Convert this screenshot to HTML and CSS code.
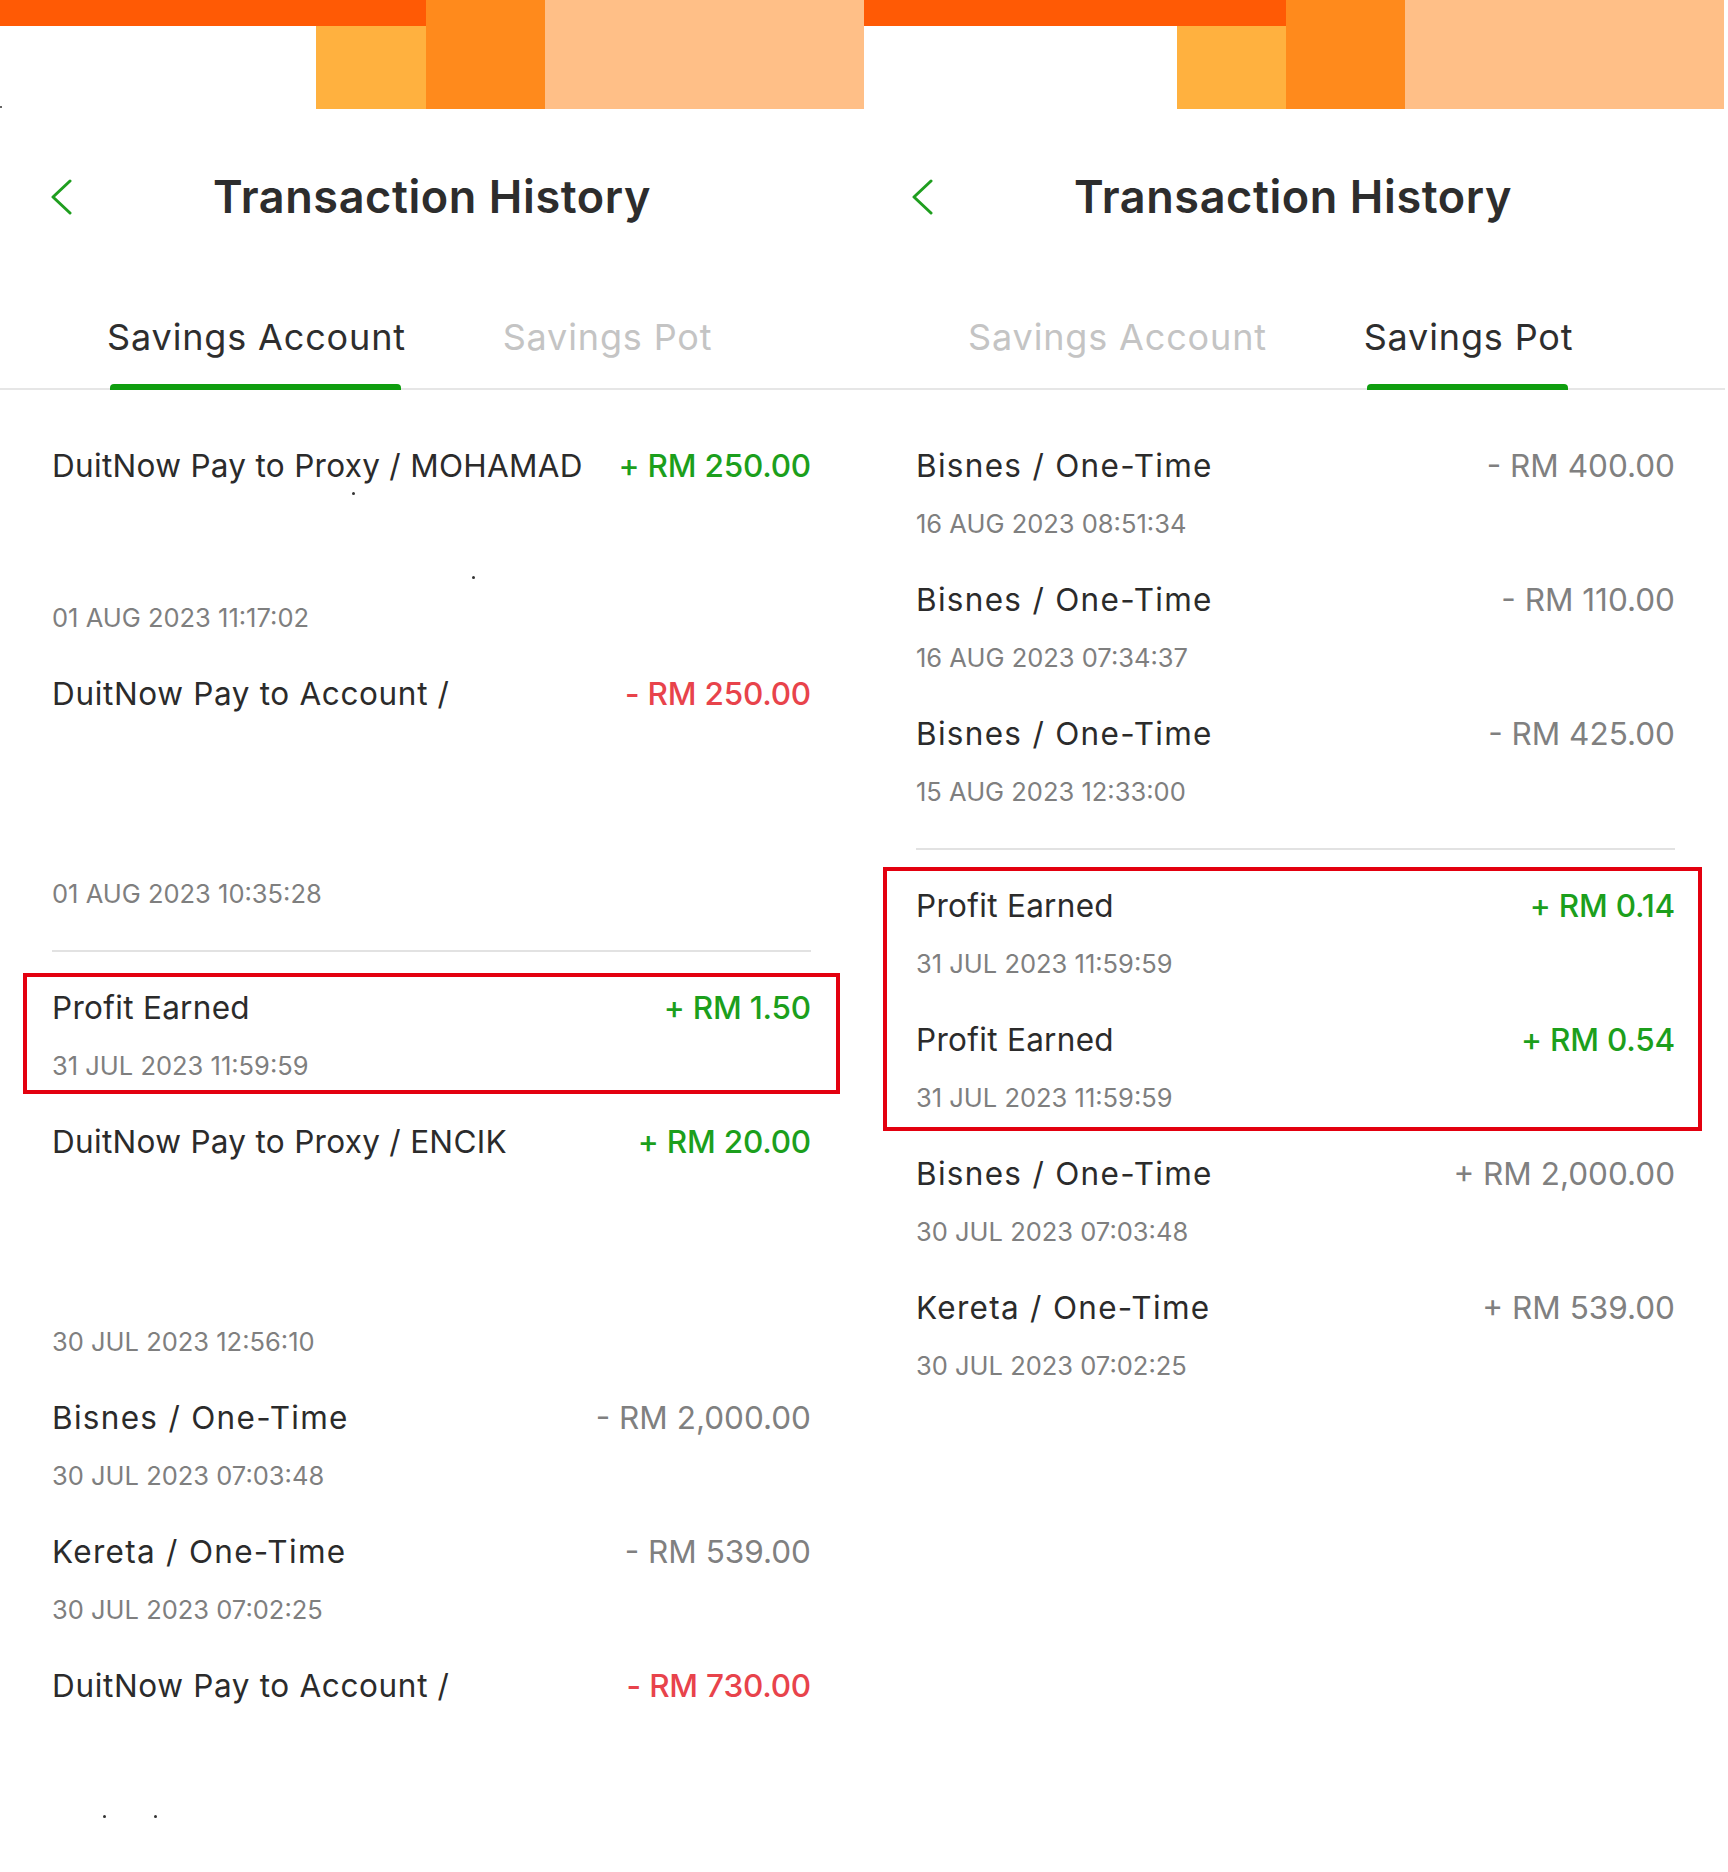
FILE: index.html
```html
<!DOCTYPE html>
<html lang="en">
<head>
<meta charset="utf-8">
<title>Transaction History</title>
<link rel="stylesheet" href="styles.css">
</head>
<body>
<div class="screens">
  <section class="panel">
    <div class="deco"><span class="d-red"></span><span class="d-lo"></span><span class="d-or"></span><span class="d-peach"></span></div>
    <header class="topbar">
      <svg class="back" width="24" height="36" viewBox="0 0 24 36"><polyline points="19,2 2,18 19,34" fill="none" stroke="#1f9e1f" stroke-width="3" stroke-linecap="round" stroke-linejoin="round"/></svg>
      <h1 class="title">Transaction History</h1>
    </header>
    <nav class="tabs">
      <div class="tab active"><span class="tab-label">Savings Account</span></div>
      <div class="tab"><span class="tab-label">Savings Pot</span></div>
    </nav>
    <ul class="list">
      <li class="row">
        <div class="line"><span class="name">DuitNow Pay to Proxy / MOHAMAD</span><span class="amt pos">+ RM 250.00</span></div>
        <div class="spacer s1"></div>
        <div class="date">01 AUG 2023 11:17:02</div>
      </li>
      <li class="row">
        <div class="line"><span class="name wide">DuitNow Pay to Account /</span><span class="amt neg">- RM 250.00</span></div>
        <div class="spacer s2"></div>
        <div class="date">01 AUG 2023 10:35:28</div>
      </li>
      <li class="sep"></li>
      <li class="highlight">
        <div class="row">
          <div class="line"><span class="name">Profit Earned</span><span class="amt pos">+ RM 1.50</span></div>
          <div class="date">31 JUL 2023 11:59:59</div>
        </div>
      </li>
      <li class="row">
        <div class="line"><span class="name">DuitNow Pay to Proxy / ENCIK</span><span class="amt pos">+ RM 20.00</span></div>
        <div class="spacer s2"></div>
        <div class="date">30 JUL 2023 12:56:10</div>
      </li>
      <li class="row">
        <div class="line"><span class="name cat">Bisnes / One-Time</span><span class="amt mute">- RM 2,000.00</span></div>
        <div class="date">30 JUL 2023 07:03:48</div>
      </li>
      <li class="row">
        <div class="line"><span class="name cat">Kereta / One-Time</span><span class="amt mute">- RM 539.00</span></div>
        <div class="date">30 JUL 2023 07:02:25</div>
      </li>
      <li class="row">
        <div class="line"><span class="name wide">DuitNow Pay to Account /</span><span class="amt neg">- RM 730.00</span></div>
      </li>
    </ul>
    <span class="speck k1"></span><span class="speck k2"></span><span class="speck k3"></span><span class="speck k4"></span><span class="speck k5"></span>
  </section>

  <section class="panel alt">
    <div class="deco"><span class="d-red"></span><span class="d-lo"></span><span class="d-or"></span><span class="d-peach"></span></div>
    <header class="topbar nudge">
      <svg class="back" width="24" height="36" viewBox="0 0 24 36"><polyline points="19,2 2,18 19,34" fill="none" stroke="#1f9e1f" stroke-width="3" stroke-linecap="round" stroke-linejoin="round"/></svg>
      <h1 class="title">Transaction History</h1>
    </header>
    <nav class="tabs nudge">
      <div class="tab"><span class="tab-label">Savings Account</span></div>
      <div class="tab active"><span class="tab-label">Savings Pot</span></div>
    </nav>
    <ul class="list nudge-more">
      <li class="row">
        <div class="line"><span class="name cat">Bisnes / One-Time</span><span class="amt mute">- RM 400.00</span></div>
        <div class="date">16 AUG 2023 08:51:34</div>
      </li>
      <li class="row">
        <div class="line"><span class="name cat">Bisnes / One-Time</span><span class="amt mute">- RM 110.00</span></div>
        <div class="date">16 AUG 2023 07:34:37</div>
      </li>
      <li class="row">
        <div class="line"><span class="name cat">Bisnes / One-Time</span><span class="amt mute">- RM 425.00</span></div>
        <div class="date">15 AUG 2023 12:33:00</div>
      </li>
      <li class="sep"></li>
      <li class="highlight tall">
        <div class="row">
          <div class="line"><span class="name">Profit Earned</span><span class="amt pos">+ RM 0.14</span></div>
          <div class="date">31 JUL 2023 11:59:59</div>
        </div>
        <div class="row">
          <div class="line"><span class="name">Profit Earned</span><span class="amt pos">+ RM 0.54</span></div>
          <div class="date">31 JUL 2023 11:59:59</div>
        </div>
      </li>
      <li class="row">
        <div class="line"><span class="name cat">Bisnes / One-Time</span><span class="amt mute">+ RM 2,000.00</span></div>
        <div class="date">30 JUL 2023 07:03:48</div>
      </li>
      <li class="row">
        <div class="line"><span class="name cat">Kereta / One-Time</span><span class="amt mute">+ RM 539.00</span></div>
        <div class="date">30 JUL 2023 07:02:25</div>
      </li>
    </ul>
  </section>
</div>
</body>
</html>
```

FILE: styles.css
```css
* { box-sizing: border-box; }
html, body { margin: 0; padding: 0; background: #ffffff; }
body {
  font-family: "Inter", "Liberation Sans", sans-serif;
  color: #2b2b2b;
  width: 1728px;
  height: 1872px;
  overflow: hidden;
}
.screens {
  display: grid;
  grid-template-columns: 864px 864px;
  height: 1872px;
}
.panel {
  position: relative;
  overflow: hidden;
  background: #fff;
}

/* top decoration */
.deco {
  display: grid;
  grid-template-columns: 316px 110px 119px 1fr;
  grid-template-rows: 26px 83px;
  height: 109px;
}
.alt .deco { grid-template-columns: 313px 109px 119px 1fr; margin-right: 4px; }
.d-red { grid-column: 1 / 3; grid-row: 1; background: #ff5a05; }
.d-lo { grid-column: 2; grid-row: 2; background: #ffb13f; }
.d-or { grid-column: 3; grid-row: 1 / 3; background: #ff8a1c; }
.d-peach { grid-column: 4; grid-row: 1 / 3; background: #ffbf87; }

.nudge { margin-left: -3px; margin-right: 3px; }
.nudge-more { margin-left: -8px; margin-right: 8px; }

/* header */
.topbar {
  display: grid;
  grid-template-columns: 1fr auto 1fr;
  align-items: center;
  padding-top: 58px;
  height: 118px;
}
.back { margin-left: 51px; display: block; }
.title {
  grid-column: 2;
  margin: 0;
  font-size: 45px;
  font-weight: 600;
  line-height: 60px;
  letter-spacing: 0.6px;
  color: #2d2d2d;
}

/* tabs */
.tabs {
  display: grid;
  grid-template-columns: 1fr 1fr;
  padding: 86px 81px 0;
  border-bottom: 2px solid #e6e6e6;
}
.tab { display: flex; justify-content: center; }
.tab-label {
  position: relative;
  font-size: 36px;
  line-height: 48px;
  letter-spacing: 0.85px;
  padding-bottom: 27px;
  color: #c4c4c4;
  white-space: nowrap;
}
.tab.active .tab-label { color: #2e2e2e; }
.tab.active .tab-label::after {
  content: "";
  position: absolute;
  left: 3px;
  right: 5px;
  bottom: -2px;
  height: 6px;
  border-radius: 4px 4px 0 0;
  background: #0f9e0f;
}

/* list */
.list {
  list-style: none;
  margin: 0;
  padding: 54px 53px 0 52px;
  display: flex;
  flex-direction: column;
  gap: 36px;
}
.row { display: flex; flex-direction: column; }
.line {
  display: flex;
  justify-content: space-between;
  align-items: baseline;
  font-size: 31.5px;
  line-height: 44px;
  white-space: nowrap;
}
.name { color: #2b2b2b; letter-spacing: 0.3px; }
.name.cat { letter-spacing: 1.3px; }
.name.wide { letter-spacing: 0.65px; }
.amt { font-weight: 500; letter-spacing: -0.2px; }
.amt.pos { color: #1c9f1c; }
.amt.neg { color: #e8434b; }
.amt.mute { color: #808080; font-weight: 400; letter-spacing: 0; }
.date {
  margin-top: 18px;
  font-size: 25.5px;
  line-height: 36px;
  color: #7f7f7f;
}
.spacer.s1 { height: 94px; }
.spacer.s2 { height: 142px; }

.sep {
  height: 2px;
  background: #e2e2e2;
  margin: 2px 0 -2px;
}

/* annotation box */
.highlight {
  position: relative;
  display: flex;
  flex-direction: column;
  gap: 36px;
}
.highlight::after {
  content: "";
  position: absolute;
  top: -13px;
  bottom: -10px;
  left: -29px;
  right: -29px;
  border: 4px solid #e3000f;
  pointer-events: none;
}
.highlight.tall::after { top: -17px; bottom: -15px; left: -33px; right: -27px; }

/* leftover specks from redaction */
.speck {
  position: absolute;
  width: 3px;
  height: 3px;
  border-radius: 50%;
  background: #333;
}
.k1 { left: 352px; top: 492px; }
.k2 { left: 472px; top: 576px; }
.k3 { left: 103px; top: 1815px; }
.k4 { left: 154px; top: 1815px; }
.k5 { left: 0; top: 106px; width: 2px; height: 2px; }
```
